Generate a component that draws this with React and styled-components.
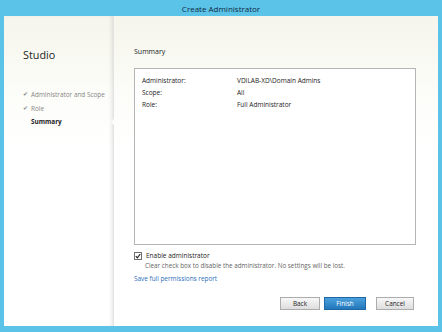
import React from 'react';
import styled, { createGlobalStyle } from 'styled-components';

const Global = createGlobalStyle`
    html, body {
        margin: 0;
        padding: 0;
        width: 442px;
        height: 332px;
        overflow: hidden;
    }
    body {
        font-family: "Open Sans", "Noto Sans", sans-serif;
        color: #222;
    }
`;

const Window = styled.div`
    width: 442px;
    height: 332px;
    box-sizing: border-box;
    background: #5cc3e8;
    padding: 0 4px 6px 4px;
    display: flex;
    flex-direction: column;
`;

const TitleBar = styled.div`
    height: 16px;
    display: flex;
    align-items: center;
    justify-content: center;
    font-size: 8px;
    color: #0f2a44;
`;

const Body = styled.div`
    flex: 1;
    display: flex;
    background: linear-gradient(to bottom, #f5f5ec 0px, #fbfbf6 60px, #ffffff 130px);
`;

const Sidebar = styled.div`
    width: 110px;
    box-sizing: border-box;
    padding: 30px 0 0 19px;
    position: relative;
    box-shadow: inset -3px 0 4px -2px rgba(0, 0, 0, 0.12);
    border-right: 1px solid #e4e4e4;
`;

const Notch = styled.div`
    position: absolute;
    right: -1px;
    top: 103px;
    width: 0;
    height: 0;
    border-top: 3px solid transparent;
    border-bottom: 3px solid transparent;
    border-right: 3px solid #ffffff;
`;

const Brand = styled.div`
    font-size: 10.8px;
    color: #1e1e1e;
    line-height: 18px;
    margin-bottom: 24px;
`;

const Step = styled.div`
    font-size: 6.4px;
    line-height: 13.5px;
    white-space: nowrap;
    color: ${p => (p.$active ? '#1a1a1a' : '#868686')};
    font-weight: ${p => (p.$active ? 700 : 400)};
    padding-left: ${p => (p.$active ? '8px' : '0')};
    display: flex;
    align-items: center;
    gap: 2px;
`;

const Check = styled.span`
    width: 6px;
    color: #8a8a8a;
    font-size: 6px;
`;

const Main = styled.div`
    flex: 1;
    padding: 30px 22px 0 20px;
    display: flex;
    flex-direction: column;
`;

const Heading = styled.div`
    font-size: 7px;
    line-height: 12px;
    color: #222;
    margin-bottom: 10px;
`;

const SummaryBox = styled.div`
    height: 177px;
    box-sizing: border-box;
    border: 1px solid #b5b5b5;
    background: #fff;
    padding: 6px 7px;
    display: grid;
    grid-template-columns: 95px 1fr;
    grid-auto-rows: 12px;
    align-content: start;
    font-size: 6.5px;
    color: #222;
`;

const Cell = styled.div`
    line-height: 12px;
    white-space: nowrap;
`;

const CheckRow = styled.label`
    margin-top: 6px;
    display: flex;
    align-items: center;
    gap: 4px;
    font-size: 6.5px;
    line-height: 10px;
    color: #222;
`;

const Box = styled.span`
    width: 6px;
    height: 6px;
    border: 1px solid #707070;
    background: #fff;
    display: inline-flex;
    align-items: center;
    justify-content: center;
`;

const Hint = styled.div`
    padding-left: 11px;
    font-size: 6.3px;
    line-height: 10px;
    white-space: nowrap;
    color: #666;
`;

const ReportLink = styled.a`
    margin-top: 3px;
    font-size: 6.4px;
    line-height: 10px;
    color: #2a6ebb;
    text-decoration: none;
`;

const Buttons = styled.div`
    margin-top: 13px;
    padding-right: 2px;
    display: flex;
    justify-content: flex-end;
    gap: 4px;
`;

const Button = styled.div`
    width: ${p => p.$width || '40px'};
    height: 13px;
    box-sizing: border-box;
    display: flex;
    align-items: center;
    justify-content: center;
    font-size: 6.4px;
    margin-left: ${p => p.$gap || '0'};
    border: 1px solid ${p => (p.$primary ? '#1f67a4' : '#acacac')};
    color: ${p => (p.$primary ? '#ffffff' : '#222')};
    background: ${p =>
        p.$primary
            ? 'linear-gradient(to bottom, #4aa0dc, #2377bb)'
            : 'linear-gradient(to bottom, #f8f8f8, #dddddd)'};
`;

export default function App() {
    return (
        <>
            <Global />
            <Window>
                <TitleBar>Create Administrator</TitleBar>
                <Body>
                    <Sidebar>
                        <Notch />
                        <Brand>Studio</Brand>
                        <Step><Check>✔</Check>Administrator and Scope</Step>
                        <Step><Check>✔</Check>Role</Step>
                        <Step $active>Summary</Step>
                    </Sidebar>
                    <Main>
                        <Heading>Summary</Heading>
                        <SummaryBox>
                            <Cell>Administrator:</Cell>
                            <Cell>VDILAB-XD\Domain Admins</Cell>
                            <Cell>Scope:</Cell>
                            <Cell>All</Cell>
                            <Cell>Role:</Cell>
                            <Cell>Full Administrator</Cell>
                        </SummaryBox>
                        <CheckRow>
                            <Box>
                                <svg width="6" height="6" viewBox="0 0 6 6">
                                    <path d="M0.8 3.2 L2.3 4.8 L5.3 1" fill="none" stroke="#222" strokeWidth="1.2" />
                                </svg>
                            </Box>
                            Enable administrator
                        </CheckRow>
                        <Hint>Clear check box to disable the administrator. No settings will be lost.</Hint>
                        <ReportLink href="#">Save full permissions report</ReportLink>
                        <Buttons>
                            <Button>Back</Button>
                            <Button $primary $width="42px">Finish</Button>
                            <Button $gap="6px" $width="38px">Cancel</Button>
                        </Buttons>
                    </Main>
                </Body>
            </Window>
        </>
    );
}
